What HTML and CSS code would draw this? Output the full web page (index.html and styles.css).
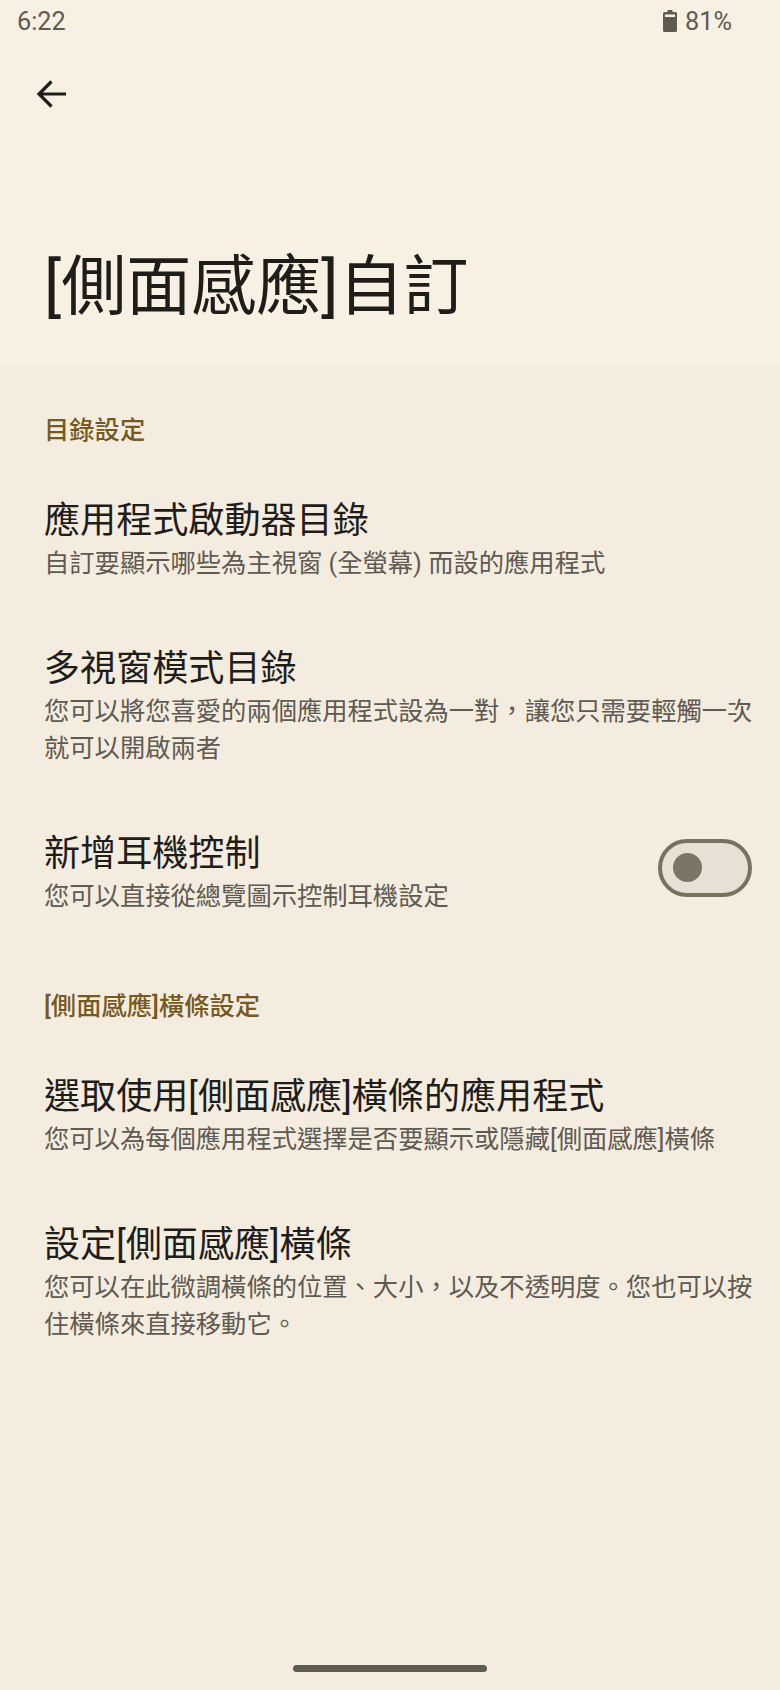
FILE: index.html
```html
<!DOCTYPE html>
<html lang="zh-Hant">
<head>
<meta charset="utf-8">
<title>[側面感應]自訂</title>
<link rel="stylesheet" href="styles.css">
</head>
<body>
<div class="screen">
  <header class="header">
    <div class="status">
      <span class="time">6:22</span>
      <span class="status-right">
        <svg class="battery" viewBox="0 0 14 22" aria-hidden="true"><path class="batt-body" d="M4.5 0h5v2h3a1.5 1.5 0 0 1 1.5 1.5v17a1.5 1.5 0 0 1-1.5 1.5h-11A1.5 1.5 0 0 1 0 20.500v-17A1.500 1.500 0 0 1 1.500 2h3z"/><rect class="batt-gap" x="2" y="4.500" width="10" height="2.500"/></svg>
        <span class="pct">81%</span>
      </span>
    </div>
    <div class="toolbar">
      <svg class="back" viewBox="0 0 30 28" aria-hidden="true"><path d="M30 14H3M15.500 1.500L3 14l12.500 12.500"/></svg>
    </div>
    <h1 class="page-title">[側面感應]自訂</h1>
  </header>
  <main class="content">
    <h2 class="section first">目錄設定</h2>
    <div class="item">
      <div class="item-title">應用程式啟動器目錄</div>
      <div class="item-sub">自訂要顯示哪些為主視窗 (全螢幕) 而設的應用程式</div>
    </div>
    <div class="item">
      <div class="item-title">多視窗模式目錄</div>
      <div class="item-sub">您可以將您喜愛的兩個應用程式設為一對，讓您只需要輕觸一次就可以開啟兩者</div>
    </div>
    <div class="item item-row">
      <div class="item-text">
        <div class="item-title">新增耳機控制</div>
        <div class="item-sub">您可以直接從總覽圖示控制耳機設定</div>
      </div>
      <div class="toggle"><span class="thumb"></span></div>
    </div>
    <h2 class="section">[側面感應]橫條設定</h2>
    <div class="item">
      <div class="item-title">選取使用[側面感應]橫條的應用程式</div>
      <div class="item-sub">您可以為每個應用程式選擇是否要顯示或隱藏[側面感應]橫條</div>
    </div>
    <div class="item">
      <div class="item-title">設定[側面感應]橫條</div>
      <div class="item-sub">您可以在此微調橫條的位置、大小，以及不透明度。您也可以按住橫條來直接移動它。</div>
    </div>
  </main>
  <div class="nav-area"><span class="nav-bar"></span></div>
</div>
</body>
</html>
```
FILE: styles.css
```css
* { box-sizing: border-box; }
html, body { margin: 0; padding: 0; }
body {
  background: #f4ecdf;
  font-family: Roboto, "Noto Sans CJK TC", sans-serif;
  color: #1f1d1a;
}
.screen {
  width: 780px;
  height: 1690px;
  display: flex;
  flex-direction: column;
  overflow: hidden;
}
.header {
  height: 366px;
  background: #f8f0e3;
}
.status {
  height: 42px;
  display: flex;
  justify-content: space-between;
  align-items: center;
  padding: 0 48px 0 17px;
  font-size: 25.3px;
  color: #5f5a52;
}
.status-right { display: flex; align-items: center; gap: 8px; }
.battery { width: 14px; height: 22px; display: block; }
.batt-body { fill: #5f5a52; }
.batt-gap { fill: #f8f0e3; }
.toolbar {
  height: 70px;
  padding: 38px 0 0 36px;
}
.back {
  width: 30px;
  height: 28px;
  display: block;
  fill: none;
  stroke: #1f1d1a;
  stroke-width: 3.2;
}
.page-title {
  margin: 129px 0 0;
  padding-left: 44px;
  font-size: 65px;
  font-weight: 400;
  line-height: 92px;
  color: #1f1d1a;
}
.content { flex: 1; }
.section {
  margin: 0;
  padding: 43px 44px 16px;
  font-size: 25.3px;
  font-weight: 500;
  line-height: 36px;
  color: #76591f;
}
.section.first { padding-top: 47px; }
.item { padding: 33px 20px 31px 44px; }
.item-title {
  font-size: 36.1px;
  line-height: 46px;
  color: #1f1d1a;
}
.item-sub {
  margin-top: 1px;
  font-size: 25.3px;
  line-height: 37px;
  color: #5f5a52;
}
.item-row {
  display: flex;
  justify-content: space-between;
  align-items: center;
  padding-right: 28px;
}
.toggle {
  width: 94px;
  height: 58px;
  margin-bottom: 11px;
  border: 4px solid #787060;
  border-radius: 29px;
  background: #e8e0d5;
  display: flex;
  align-items: center;
  padding-left: 11px;
}
.thumb {
  width: 29px;
  height: 29px;
  border-radius: 50%;
  background: #7c7465;
}
.nav-area {
  height: 40px;
  display: flex;
  justify-content: center;
  padding-top: 15px;
}
.nav-bar {
  width: 194px;
  height: 7px;
  border-radius: 4px;
  background: #5f5a52;
}
```
